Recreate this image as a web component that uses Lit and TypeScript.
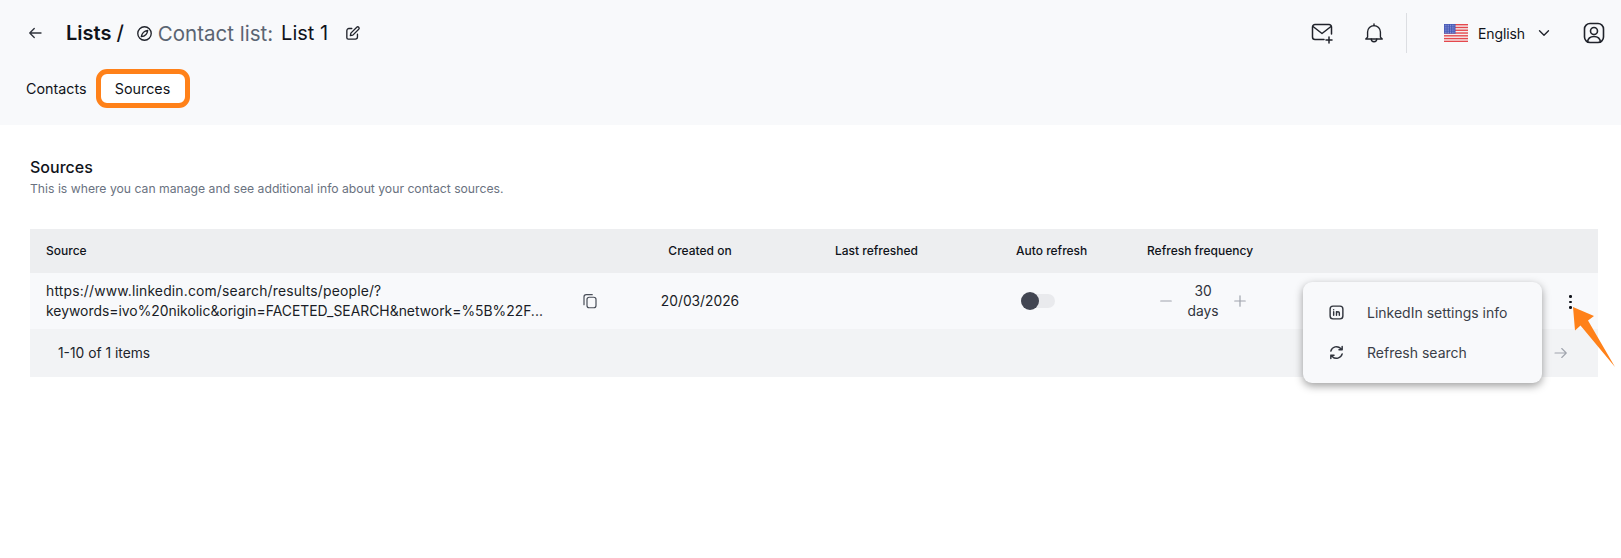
import { LitElement, html, css, svg } from "lit";
import { customElement } from "lit/decorators.js";

const ic = (size: number, body: unknown, sw = 1.7, cls = "") => html`<svg class=${cls} width=${size} height=${size} viewBox="0 0 24 24" fill="none" stroke="currentColor" stroke-width=${sw} stroke-linecap="round" stroke-linejoin="round">${body}</svg>`;

const stripes = [0, 2, 4, 6, 8, 10, 12].map((i) => svg`<rect x="0" y=${i * 1.39} width="24" height="1.39" fill="#e5484d"/>`);
const stars: unknown[] = [];
for (let r = 0; r < 5; r++) for (let c = 0; c < 6; c++) stars.push(svg`<rect x=${0.8 + c * 1.75} y=${0.8 + r * 1.9} width="0.8" height="0.8" fill="#c9d2f2"/>`);

@customElement("app-root")
export class AppRoot extends LitElement {
  static styles = css`
    :host { display: block; width: 1621px; height: 558px; background: #fff; font-family: Inter, "Noto Sans", sans-serif; color: #1a1d26; position: relative; overflow: hidden; }
    .head { height: 125px; background: #f8f9fb; box-sizing: border-box; padding: 12px 15px 0 26px; }
    .top { display: flex; align-items: center; height: 42px; }
    .back { display: flex; width: 40px; color: #30343d; }
    .title { font-size: 20px; font-weight: 600; color: #10131a; }
    .slash { font-size: 20px; font-weight: 500; margin-left: 5px; color: #10131a; }
    .compass { display: flex; margin-left: 12px; color: #20232b; }
    .cl { font-size: 20.5px; color: #5b6472; margin-left: 5px; }
    .ln { font-size: 20px; color: #10131a; margin-left: 8px; }
    .edit { display: flex; margin-left: 16px; color: #20232b; }
    .spacer { flex: 1; }
    .ricon { display: flex; color: #20232b; }
    .bell { margin-left: 29px; }
    .divider { width: 1px; height: 40px; background: #dcdee2; margin: 0 37px 0 21px; }
    .flag { display: block; }
    .lang { font-size: 14px; margin-left: 10px; color: #10131a; letter-spacing: -0.1px; }
    .chev { display: flex; margin-left: 10px; color: #20232b; }
    .user { margin-left: 29px; }
    .tabs { display: flex; align-items: center; margin-top: 15px; font-size: 14.3px; color: #10131a; }
    .tabs span.c { margin-right: 9px; }
    .tab { box-sizing: border-box; width: 94px; height: 39px; border: 5px solid #ff8119; border-radius: 11px; background: #fff; display: flex; align-items: center; justify-content: center; }
    .main { padding: 31px 23px 0 30px; }
    h2 { margin: 0; font-size: 16px; font-weight: 500; line-height: 22px; color: #10131a; }
    .sub { font-size: 12.2px; color: #6a7280; line-height: 17px; margin-top: 2px; }
    .table { margin-top: 32px; }
    .row { display: grid; grid-template-columns: 551px 49px 140px 246px 131px 1fr; align-items: center; }
    .thead { height: 44px; background: #edeef0; font-size: 12px; font-weight: 500; color: #10131a; padding-bottom: 1px; box-sizing: border-box; }
    .tbody { height: 56px; background: #f8f9fb; font-size: 13.8px; color: #1a1d26; }
    .c1 { padding-left: 16px; }
    .lr { padding-left: 65px; }
    .url { line-height: 20px; white-space: nowrap; font-size: 13.9px; }
    .l1 { letter-spacing: 0.17px; }
    .copy { display: flex; color: #4a4f59; }
    .ctr { text-align: center; }
    .tog { position: relative; display: block; width: 34px; height: 14px; background: #e9eaed; border-radius: 7px; margin-left: 5px; }
    .knob { position: absolute; left: 0; top: -2px; width: 18px; height: 18px; border-radius: 50%; background: #424652; }
    .freq { display: flex; align-items: center; color: #a0a4ad; }
    .freq .val { width: 38px; margin: 0 9px 0 9px; color: #30343d; line-height: 20.5px; font-size: 13.8px; text-align: center; }
    .freq .mi { display: flex; margin-left: 10px; }
    .foot { height: 48px; background: #f2f3f5; display: flex; align-items: center; padding-left: 28px; font-size: 13.8px; color: #20232b; justify-content: space-between; }
    .next { display: flex; color: #a0a4ad; margin-right: 28px; }
    .menu { position: absolute; left: 1303px; top: 282px; width: 239px; height: 101px; background: #f8f9fb; border-radius: 9px; box-shadow: 0 3px 8px rgba(0,0,0,.38); box-sizing: border-box; padding: 10px 0; }
    .mi-row { display: flex; align-items: center; height: 40px; padding-left: 25px; font-size: 14px; color: #3a3e48; }
    .mi-row svg { margin-right: 22px; color: #30343d; }
    .dots { position: absolute; left: 1569px; top: 295px; display: flex; flex-direction: column; gap: 3px; }
    .dots i { width: 2.6px; height: 2.6px; border-radius: 50%; background: #10131a; display: block; }
    .arrow { position: absolute; left: 1570px; top: 305px; }
  `;

  render() {
    return html`
      <div class="head">
        <div class="top">
          <span class="back">${ic(18, svg`<path d="M20 12H5M11 6l-6 6 6 6"/>`, 1.8)}</span>
          <span class="title">Lists</span><span class="slash">/</span>
          <span class="compass">${ic(17, svg`<circle cx="12" cy="12" r="9.5"/><path d="M16.5 7.5c-4 .6-8 3.5-9 9 5-.6 8.500-4.500 9-9z"/>`, 1.9)}</span>
          <span class="cl">Contact list:</span><span class="ln">List 1</span>
          <span class="edit">${ic(17, svg`<path d="M11 5H7a3 3 0 0 0-3 3v10a2 2 0 0 0 2 2h10a3 3 0 0 0 3-3v-4"/><path d="M9 15l.7-3.500L18 3.200a1.900 1.900 0 0 1 2.800 2.800L12.500 14.300z"/>`, 1.9)}</span>
          <span class="spacer"></span>
          <span class="ricon">${ic(24, svg`<path d="M14 18.500H5a2.500 2.500 0 0 1-2.500-2.500V6A2.500 2.500 0 0 1 5 3.500h14A2.500 2.500 0 0 1 21.500 6v7"/><path d="M3 5.500l9 7 9-7"/><path d="M19 16v6M16 19h6"/>`, 1.5)}</span>
          <span class="ricon bell">${ic(22, svg`<path d="M5 16.500V11a7 7 0 0 1 14 0v5.500l2 2H3z"/><path d="M12 4V2M9 18.500a3 3 0 0 0 6 0"/>`, 1.5)}</span>
          <span class="divider"></span>
          <svg class="flag" width="24" height="18" viewBox="0 0 24 18"><rect width="24" height="18" fill="#f3f0f0"/>${stripes}<rect width="11.500" height="9.700" fill="#4355b5"/>${stars}</svg>
          <span class="lang">English</span>
          <span class="chev">${ic(18, svg`<path d="M6 9l6 6 6-6"/>`, 1.8)}</span>
          <span class="ricon user">${ic(24, svg`<rect x="2.500" y="2.500" width="19" height="19" rx="5.500"/><circle cx="12" cy="10" r="3.500"/><path d="M5.500 21c.5-4 3-5.500 6.500-5.500s6 1.500 6.500 5.500"/>`, 1.6)}</span>
        </div>
        <div class="tabs"><span class="c">Contacts</span><div class="tab">Sources</div></div>
      </div>
      <div class="main">
        <h2>Sources</h2>
        <div class="sub">This is where you can manage and see additional info about your contact sources.</div>
        <div class="table">
          <div class="row thead">
            <div class="c1">Source</div><div></div><div class="ctr">Created on</div>
            <div class="lr">Last refreshed</div>
            <div>Auto refresh</div>
            <div>Refresh frequency</div>
          </div>
          <div class="row tbody">
            <div class="c1 url"><span class="l1">https://www.linkedin.com/search/results/people/?</span><br>keywords=ivo%20nikolic&origin=FACETED_SEARCH&network=%5B%22F...</div>
            <span class="copy">${ic(18, svg`<rect x="8" y="7" width="12" height="14" rx="3"/><path d="M15 3.500H7a3 3 0 0 0-3 3V17"/>`, 1.6)}</span>
            <div class="ctr">20/03/2026</div>
            <div></div>
            <div><span class="tog"><span class="knob"></span></span></div>
            <div class="freq">
              <span class="mi">${ic(18, svg`<path d="M5 12h14"/>`, 1.6)}</span>
              <span class="val">30 days</span>
              ${ic(18, svg`<path d="M5 12h14M12 5v14"/>`, 1.6)}
            </div>
          </div>
          <div class="foot"><span>1-10 of 1 items</span><span class="next">${ic(18, svg`<path d="M4 12h15M13 6l6 6-6 6"/>`, 1.5)}</span></div>
        </div>
      </div>
      <div class="menu">
        <div class="mi-row">${ic(17, svg`<rect x="3" y="3" width="18" height="18" rx="4"/><path d="M8 11v5M8 8v.2M12 16v-5M12 13c0-2.500 4-2.800 4 0v3"/>`, 2)}LinkedIn settings info</div>
        <div class="mi-row">${ic(17, svg`<path d="M4 10a8.200 8.200 0 0 1 14-3.500L20 8M20 3.500V8h-4.500"/><path d="M20 14a8.200 8.200 0 0 1-14 3.500L4 16M4 20.500V16h4.500"/>`, 2.1)}Refresh search</div>
      </div>
      <div class="dots"><i></i><i></i><i></i></div>
      <svg class="arrow" width="48" height="64" viewBox="0 0 48 64"><path d="M3 2L24 11 18 15.500 45 62 10.500 20.500 5 25.500z" fill="#ff8119"/></svg>
    `;
  }
}
